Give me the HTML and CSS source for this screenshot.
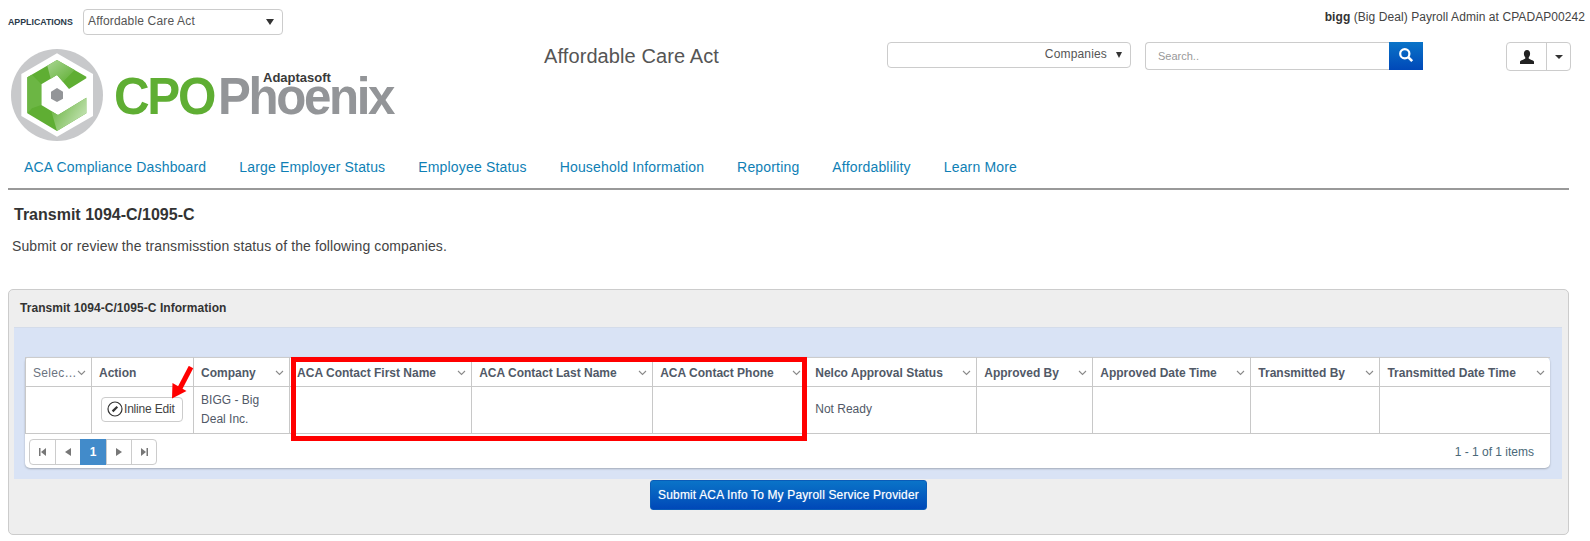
FILE: index.html
```html
<!DOCTYPE html>
<html lang="en">
<head>
    <meta charset="UTF-8">
    <meta name="viewport" content="width=device-width, initial-scale=1.0">
    <title>Transmit 1094-C/1095-C</title>
    <link rel="stylesheet" href="styles.css">
</head>
<body>
    <svg class="defs" width="0" height="0">
        <symbol id="chev" viewBox="0 0 9 6"><path d="M1 1l3.5 3.5L8 1" fill="none" stroke="#8a8a8a" stroke-width="1.1"/></symbol>
        <linearGradient id="shine" x1="0" y1="0" x2="1" y2="1">
            <stop offset="0" stop-color="#a9d692"/>
            <stop offset="1" stop-color="#5fae33"/>
        </linearGradient>
        <linearGradient id="shine2" x1="0" y1="0" x2="1" y2="0.6">
            <stop offset="0" stop-color="#5fae33"/>
            <stop offset="1" stop-color="#c4e3b4"/>
        </linearGradient>
    </svg>

    <div class="app-bar">
        <div class="app-pick">
            <span class="app-label">APPLICATIONS</span>
            <div class="drop app-drop">
                <span>Affordable Care Act</span>
                <i class="tri"></i>
            </div>
        </div>
        <div class="user-info"><b>bigg</b> (Big Deal) Payroll Admin at CPADAP00242</div>
    </div>

    <header class="head-main">
        <svg class="logo" width="402" height="100" viewBox="0 0 402 100">
            <g transform="translate(0,-1) scale(0.3333)">
                <circle cx="147" cy="150" r="138" fill="#c8c9cb"/>
                <path d="M147 25L255 87V213L147 275L40 213V87Z" fill="#fff"/>
                <path d="M147 45L235 95V100L183 132L147 90L100 118V180L150 210L235 158V205L147 258L58 205V97Z" fill="#5fae33"/>
                <path d="M118 62L147 45L200 75L165 110L147 90L128 101Z" fill="url(#shine)"/>
                <path d="M58 97L72 89L100 118V180L72 190L58 205Z" fill="#6cb644"/>
                <path d="M130 199L150 210L235 158V205L147 258Z" fill="url(#shine2)"/>
                <path d="M147 129L165 140V161L147 171L129 161V140Z" fill="#939598"/>
            </g>
            <text class="logo-cpo" x="106" y="68" textLength="100" lengthAdjust="spacingAndGlyphs">CPO</text>
            <text class="logo-phx" x="210" y="68" textLength="175" lengthAdjust="spacingAndGlyphs">Phoenix</text>
            <text class="logo-ada" x="255" y="36">Adaptasoft</text>
        </svg>
        <div class="app-title">Affordable Care Act</div>
        <div class="drop company-drop">
            <span>Companies</span>
            <i class="tri tri-co"></i>
        </div>
        <div class="search">
            <input type="text" placeholder="Search..">
            <button type="button" aria-label="Search">
                <svg width="16" height="16" viewBox="0 0 16 16"><circle cx="6.8" cy="6.8" r="4.6" fill="none" stroke="#fff" stroke-width="2.2"/><path d="M10.2 10.2l4 4" stroke="#fff" stroke-width="2.6"/></svg>
            </button>
        </div>
        <div class="user-btn">
            <span class="user-icon">
                <svg width="14" height="14" viewBox="0 0 14 14"><path d="M7 0C4.9 0 3.9 1.6 3.9 3.6c0 1.5.5 2.9 1.4 3.8v1.2C3.8 9.6 1 10.3 0 11.6V14h14v-2.4c-1-1.3-3.8-2-5.300-3V7.400c.9-.9 1.400-2.300 1.400-3.800C10.100 1.600 9.100 0 7 0z" fill="#222"/></svg>
            </span>
            <span class="user-caret"><i class="tri tri-sm"></i></span>
        </div>
    </header>

    <div class="page">
        <nav class="tabs">
            <a href="#">ACA Compliance Dashboard</a>
            <a href="#">Large Employer Status</a>
            <a href="#">Employee Status</a>
            <a href="#">Household Information</a>
            <a href="#">Reporting</a>
            <a href="#">Affordablility</a>
            <a href="#">Learn More</a>
        </nav>

        <h1 class="page-title">Transmit 1094-C/1095-C</h1>
        <p class="page-sub">Submit or review the transmisstion status of the following companies.</p>

        <section class="panel">
            <h2 class="panel-title">Transmit 1094-C/1095-C Information</h2>
            <div class="panel-body">
                <div class="grid-wrap">
                    <table class="grid">
                        <colgroup>
                            <col class="c-sel"><col class="c-act"><col class="c-com"><col class="c-first"><col class="c-last"><col class="c-phone"><col class="c-nelco"><col class="c-by"><col class="c-date"><col class="c-tby"><col class="c-tdate">
                        </colgroup>
                        <thead>
                            <tr>
                                <th class="th-sel"><div class="th-in"><span>Selec…</span><svg class="chev"><use href="#chev"/></svg></div></th>
                                <th><div class="th-in"><span>Action</span></div></th>
                                <th><div class="th-in"><span>Company</span><svg class="chev"><use href="#chev"/></svg></div></th>
                                <th class="th-first"><div class="th-in"><span>ACA Contact First Name</span><svg class="chev"><use href="#chev"/></svg></div></th>
                                <th><div class="th-in"><span>ACA Contact Last Name</span><svg class="chev"><use href="#chev"/></svg></div></th>
                                <th><div class="th-in"><span>ACA Contact Phone</span><svg class="chev"><use href="#chev"/></svg></div></th>
                                <th class="th-nelco"><div class="th-in"><span>Nelco Approval Status</span><svg class="chev"><use href="#chev"/></svg></div></th>
                                <th><div class="th-in"><span>Approved By</span><svg class="chev"><use href="#chev"/></svg></div></th>
                                <th><div class="th-in"><span>Approved Date Time</span><svg class="chev"><use href="#chev"/></svg></div></th>
                                <th><div class="th-in"><span>Transmitted By</span><svg class="chev"><use href="#chev"/></svg></div></th>
                                <th><div class="th-in"><span>Transmitted Date Time</span><svg class="chev"><use href="#chev"/></svg></div></th>
                            </tr>
                        </thead>
                        <tbody>
                            <tr>
                                <td></td>
                                <td>
                                    <button type="button" class="edit-btn">
                                        <svg width="16" height="16" viewBox="0 0 16 16"><circle cx="8" cy="8" r="7" fill="none" stroke="#333" stroke-width="1.2"/><path d="M5.600 10.400L10.300 5.700" stroke="#333" stroke-width="2.200"/></svg>
                                        Inline Edit
                                    </button>
                                </td>
                                <td>BIGG - Big Deal Inc.</td>
                                <td></td>
                                <td></td>
                                <td></td>
                                <td class="td-status">Not Ready</td>
                                <td></td>
                                <td></td>
                                <td></td>
                                <td></td>
                            </tr>
                        </tbody>
                    </table>
                    <div class="pager-row">
                        <div class="pager">
                            <a href="#"><svg width="9" height="8" viewBox="0 0 9 8"><path d="M1 0h1.500v8H1zM8 0v8L3 4z" fill="#777"/></svg></a>
                            <a href="#"><svg width="6" height="8" viewBox="0 0 6 8"><path d="M6 0v8L0 4z" fill="#777"/></svg></a>
                            <a href="#" class="on">1</a>
                            <a href="#"><svg width="6" height="8" viewBox="0 0 6 8"><path d="M0 0v8l6-4z" fill="#777"/></svg></a>
                            <a href="#"><svg width="9" height="8" viewBox="0 0 9 8"><path d="M1 0v8l5-4zM6.500 0H8v8H6.500z" fill="#777"/></svg></a>
                        </div>
                        <span class="pager-info">1 - 1 of 1 items</span>
                    </div>

                    <div class="highlight"></div>
                    <svg class="arrow" width="24" height="36" viewBox="0 0 24 36"><path d="M20 1L8 24" stroke="#f00" stroke-width="5"/><path d="M1 32.500L1.500 17L15.500 25Z" fill="#f00"/></svg>
                </div>
            </div>
            <div class="panel-foot">
                <button type="button" class="submit-btn">Submit ACA Info To My Payroll Service Provider</button>
            </div>
        </section>
    </div>
</body>
</html>
```

FILE: styles.css
```css
html, body {
    margin: 0;
    padding: 0;
    background-color: white;
}
body {
    font-family: "Liberation Sans", Arial, sans-serif;
    font-size: 12px;
    color: #333;
    height: 541px;
    overflow: hidden;
}
.defs {
    position: absolute;
}

/* top bar */
.app-bar {
    display: flex;
    justify-content: space-between;
    height: 33px;
    padding: 9px 5px 0 8px;
}
.app-pick {
    display: flex;
    align-items: flex-start;
}
.app-label {
    font-size: 8.8px;
    font-weight: bold;
    width: 75px;
    margin-top: 8px;
    color: #2a3a4a;
}
.drop {
    display: flex;
    align-items: center;
    box-sizing: border-box;
    height: 26px;
    border: 1px solid #ccc;
    border-radius: 4px;
    background-color: white;
    color: #555;
    padding-bottom: 3px;
    letter-spacing: 0.16px;
}
.app-drop {
    width: 200px;
    padding-left: 4px;
    padding-right: 8px;
    justify-content: space-between;
}
.tri {
    display: inline-block;
    border-left: 4px solid transparent;
    border-right: 4px solid transparent;
    border-top: 6px solid #333;
    margin-top: 3px;
}
.tri-co {
    border-left-width: 3.5px;
    border-right-width: 3.5px;
}
.tri-sm {
    border-top-width: 4px;
    margin-top: 0;
}
.user-info {
    font-size: 12px;
    color: #444;
    margin-top: 1px;
    letter-spacing: 0.07px;
}
.user-info b {
    color: #333;
}

/* logo row */
.head-main {
    display: flex;
    align-items: flex-start;
    height: 108px;
    padding-left: 8px;
}
.logo {
    flex: none;
    margin-top: 4px;
}
.logo-cpo, .logo-phx {
    font-family: "Liberation Sans", sans-serif;
    font-size: 52px;
    font-weight: bold;
    letter-spacing: -2.5px;
}
.logo-cpo {
    fill: #5fae33;
}
.logo-phx {
    fill: #939598;
}
.logo-ada {
    font-family: "Liberation Sans", sans-serif;
    font-size: 13px;
    font-weight: bold;
    fill: #3a3a3a;
}
.app-title {
    width: 443px;
    text-align: center;
    font-size: 20px;
    color: #555;
    margin-top: 3px;
    letter-spacing: 0.1px;
}
.company-drop {
    width: 244px;
    margin-left: 34px;
    justify-content: flex-end;
    padding-right: 8px;
    gap: 9px;
}
.search {
    display: flex;
    width: 278px;
    height: 28px;
    margin-left: 14px;
}
.search input {
    box-sizing: border-box;
    width: 244px;
    height: 28px;
    border: 1px solid #ccc;
    border-right: none;
    border-radius: 4px 0 0 4px;
    padding: 0 12px;
    font-family: inherit;
    font-size: 11px;
}
.search input::placeholder {
    color: #999;
}
.search button {
    display: flex;
    align-items: center;
    justify-content: center;
    width: 34px;
    height: 28px;
    padding: 0 0 2px;
    border: none;
    background: linear-gradient(#0a74c8, #0048b8);
}
.user-btn {
    display: flex;
    box-sizing: border-box;
    width: 65px;
    height: 29px;
    margin-left: 83px;
    border: 1px solid #ccc;
    border-radius: 4px;
}
.user-icon {
    display: flex;
    align-items: center;
    justify-content: center;
    width: 39px;
    border-right: 1px solid #ccc;
}
.user-caret {
    display: flex;
    align-items: center;
    justify-content: center;
    flex: 1;
}

/* page */
.page {
    margin: 0 21px 0 8px;
}
.tabs {
    display: flex;
    gap: 33px;
    height: 38px;
    padding-left: 16px;
    border-bottom: 2px solid #999;
    font-size: 14px;
    line-height: 34px;
    letter-spacing: 0.17px;
}
.tabs a {
    color: #0f7fb5;
    text-decoration: none;
}
.page-title {
    margin: 16px 0 0 6px;
    font-size: 16px;
    line-height: 18px;
    color: #333;
}
.page-sub {
    margin: 14px 0 0 4px;
    font-size: 14px;
    line-height: 16px;
    color: #444;
    letter-spacing: 0.1px;
}
.panel {
    box-sizing: border-box;
    height: 246px;
    margin-top: 35px;
    border: 1px solid #ccc;
    border-radius: 5px;
    background-color: #eee;
}
.panel-title {
    margin: 0;
    padding: 11px 0 0 11px;
    height: 26px;
    font-size: 12px;
    line-height: 14px;
    letter-spacing: 0.05px;
    color: #333;
}
.panel-body {
    box-sizing: border-box;
    height: 152px;
    margin: 0 6px 0 5px;
    padding: 29px 12px 11px 11px;
    background-color: #d9e3f5;
    border-top: 1px solid #d4dcea;
}
.grid-wrap {
    position: relative;
    height: 111px;
    background-color: white;
    border-radius: 5px;
    box-shadow: 0 1px 2px rgba(0, 0, 0, 0.25);
}
.grid {
    width: 100%;
    table-layout: fixed;
    border-collapse: collapse;
    color: #515967;
}
.c-sel { width: 66px; }
.c-act { width: 102px; }
.c-com { width: 96px; }
.c-first { width: 182px; }
.c-last { width: 181px; }
.c-phone { width: 154px; }
.c-nelco { width: 170px; }
.c-by { width: 116px; }
.c-date { width: 158px; }
.c-tby { width: 129px; }
.c-tdate { width: 170px; }
.grid th {
    height: 29px;
    padding: 1px 7px 0;
    box-sizing: border-box;
    font-size: 12px;
    text-align: left;
    border: 1px solid #c8c8c8;
    border-top: 1px solid #ccc;
}
.grid .th-nelco {
    padding-left: 8px;
}
.th-in {
    display: flex;
    align-items: center;
    justify-content: space-between;
    white-space: nowrap;
}
.th-sel {
    font-weight: normal;
    color: #6b7380;
    letter-spacing: 0.3px;
}
.grid th:last-child, .grid td:last-child {
    border-right: none;
}
.chev {
    flex: none;
    width: 9px;
    height: 6px;
    margin-right: -2px;
}
.grid td {
    height: 47px;
    padding: 0 7px;
    box-sizing: border-box;
    font-size: 12px;
    line-height: 19px;
    border: 1px solid #c8c8c8;
}
.grid .td-status {
    padding: 0 7px 2px 8px;
}
.edit-btn {
    display: flex;
    align-items: center;
    gap: 1px;
    box-sizing: border-box;
    width: 82px;
    height: 25px;
    margin: -2px 0 0 2px;
    padding: 0 0 1px 5px;
    border: 1px solid #ccc;
    border-radius: 4px;
    background-color: white;
    font-family: inherit;
    font-size: 12px;
    letter-spacing: -0.2px;
    color: #444;
}
.pager-row {
    display: flex;
    align-items: center;
    justify-content: space-between;
    height: 35px;
    padding: 0 16px 0 4px;
    color: #4a6878;
}
.pager {
    display: flex;
    height: 26px;
    box-sizing: border-box;
    border: 1px solid #ccc;
    border-radius: 4px;
    margin-top: 1px;
}
.pager a {
    display: flex;
    align-items: center;
    justify-content: center;
    box-sizing: border-box;
    width: 25px;
    border-left: 1px solid #ccc;
    text-decoration: none;
}
.pager a:first-child {
    border-left: none;
}
.pager a.on {
    margin: -1px 0;
    background-color: #428bca;
    border-left: none;
    color: white;
    font-weight: bold;
    width: 26px;
}
.highlight {
    position: absolute;
    left: 266px;
    top: 0;
    width: 516px;
    height: 84px;
    box-sizing: border-box;
    border: 5px solid #f00;
}
.arrow {
    position: absolute;
    left: 146px;
    top: 9px;
}
.panel-foot {
    display: flex;
    justify-content: center;
    margin-top: 1px;
}
.submit-btn {
    box-sizing: border-box;
    width: 277px;
    height: 30px;
    padding: 0;
    border: 1px solid #0a5cb8;
    border-radius: 3px;
    background: linear-gradient(#0a74c8, #0048b8);
    color: white;
    font-family: inherit;
    font-size: 12px;
    letter-spacing: 0.15px;
    text-shadow: 0 0 1px rgba(255, 255, 255, 0.5);
}
```
